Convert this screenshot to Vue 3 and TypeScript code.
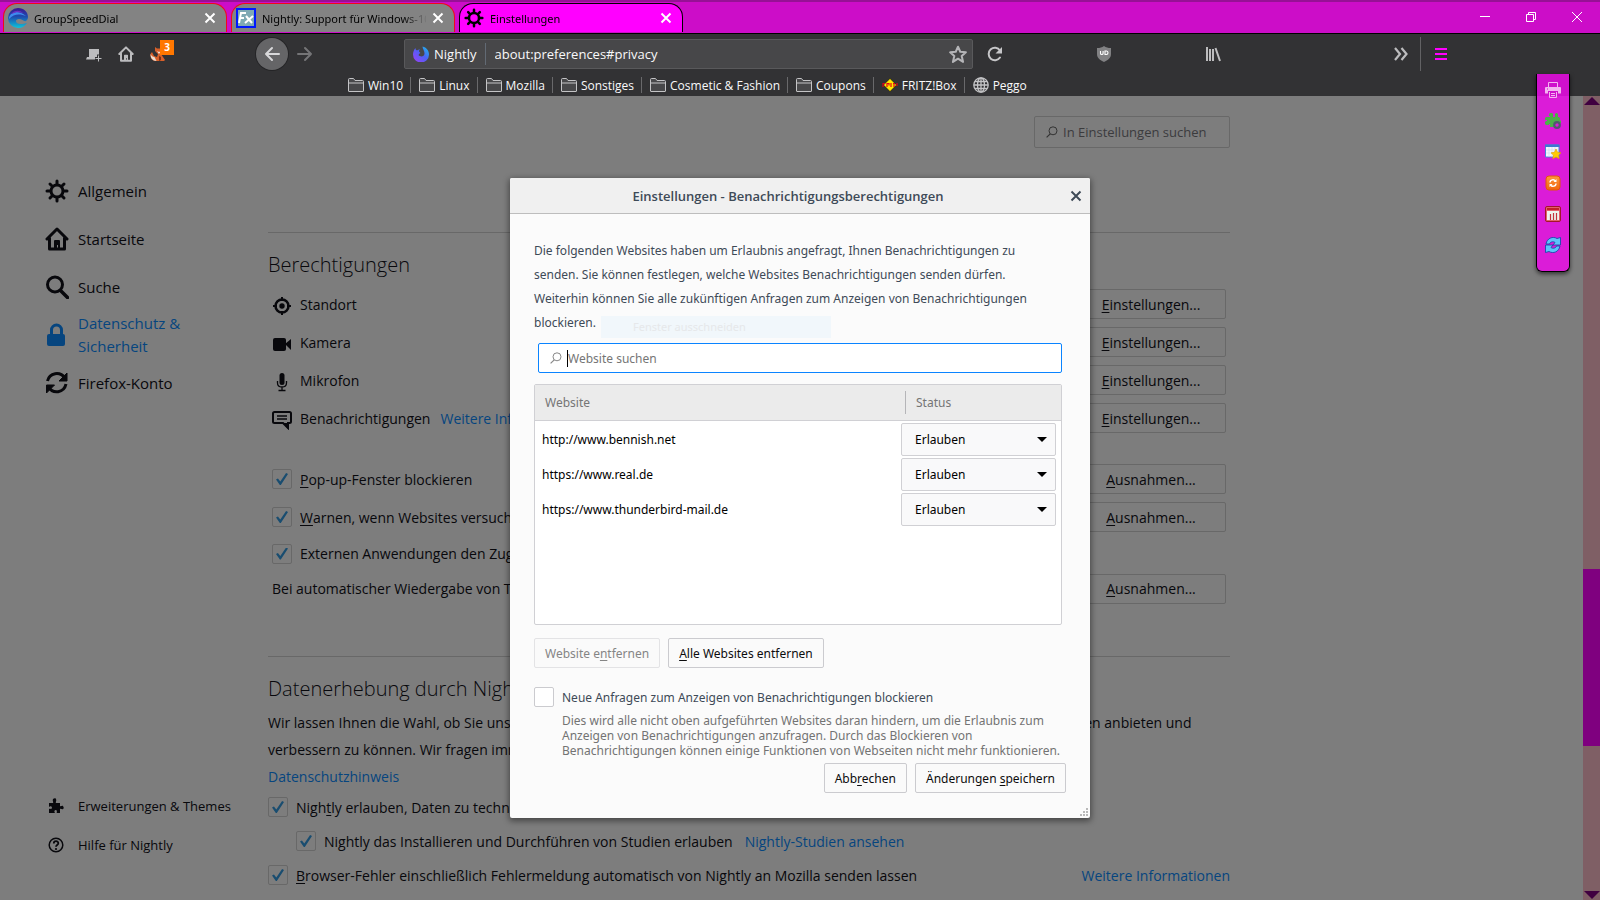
<script setup lang="ts">
import { ref } from 'vue'

interface Tab { title: string; icon: string; active: boolean }
interface Bookmark { title: string; icon: string }
interface Category { title: string; icon: string; selected?: boolean }
interface Permission { title: string; icon: string; link?: string }
interface Option { label: string; on: boolean; button?: boolean }
interface Site { url: string; status: string }

const tabs: Tab[] = [
  { title: 'GroupSpeedDial', icon: 'i-speed', active: false },
  { title: 'Nightly: Support für Windows-10', icon: 'i-fx', active: false },
  { title: 'Einstellungen', icon: 'i-gear', active: true },
]

const bookmarks: Bookmark[] = [
  { title: 'Win10', icon: 'i-folder' },
  { title: 'Linux', icon: 'i-folder' },
  { title: 'Mozilla', icon: 'i-folder' },
  { title: 'Sonstiges', icon: 'i-folder' },
  { title: 'Cosmetic & Fashion', icon: 'i-folder' },
  { title: 'Coupons', icon: 'i-folder' },
  { title: 'FRITZ!Box', icon: 'i-fritz' },
  { title: 'Peggo', icon: 'i-globe' },
]

const categories: Category[] = [
  { title: 'Allgemein', icon: 'i-gear' },
  { title: 'Startseite', icon: 'i-home' },
  { title: 'Suche', icon: 'i-search' },
  { title: 'Datenschutz & Sicherheit', icon: 'i-lock', selected: true },
  { title: 'Firefox-Konto', icon: 'i-sync' },
]

const permissions: Permission[] = [
  { title: 'Standort', icon: 'i-location' },
  { title: 'Kamera', icon: 'i-camera' },
  { title: 'Mikrofon', icon: 'i-mic' },
  { title: 'Benachrichtigungen', icon: 'i-note', link: 'Weitere Informationen' },
]

const options = ref<Option[]>([
  { label: '_Pop-up-Fenster blockieren', on: true, button: true },
  { label: '_Warnen, wenn Websites versuchen, Add-ons zu installieren', on: true, button: true },
  { label: 'Externen Anwendungen den Zugriff auf Dienste verwehren', on: true },
])

const sites = ref<Site[]>([
  { url: 'http://www.bennish.net', status: 'Erlauben' },
  { url: 'https://www.real.de', status: 'Erlauben' },
  { url: 'https://www.thunderbird-mail.de', status: 'Erlauben' },
])

const sideTools = [
  { title: 'Drucken', icon: 'i-print' },
  { title: 'Add-ons', icon: 'i-addon' },
  { title: 'Lesezeichen', icon: 'i-starwin' },
  { title: 'Neu starten', icon: 'i-restart' },
  { title: 'Kalender', icon: 'i-cal' },
  { title: 'Synchronisieren', icon: 'i-bluesync' },
]

const technical = ref(true)
const studies = ref(true)
const crashes = ref(true)
const blockNew = ref(false)
const filter = ref('')
const query = ref('')

/** Splits "Abb_rechen" into the text before, the access key and the text after. */
function parts(label: string): [string, string, string] {
  const at = label.indexOf('_')
  if (at < 0) return [label, '', '']
  return [label.slice(0, at), label[at + 1], label.slice(at + 2)]
}
</script>

<template>
  <div class="window">
    <svg class="defs" aria-hidden="true">
      <defs>
        <linearGradient id="g-speed" x1="0" y1="0" x2="0" y2="1">
          <stop offset="0" stop-color="#3d1490" /><stop offset="0.45" stop-color="#1c4fb0" /><stop offset="1" stop-color="#0fc4da" />
        </linearGradient>
        <linearGradient id="g-night" x1="1" y1="0" x2="0" y2="1">
          <stop offset="0" stop-color="#17c5e8" /><stop offset="0.45" stop-color="#4b62f5" /><stop offset="1" stop-color="#a13cf5" />
        </linearGradient>
        <linearGradient id="g-or" x1="0" y1="0" x2="0" y2="1">
          <stop offset="0" stop-color="#ff9a3c" /><stop offset="1" stop-color="#f0640f" />
        </linearGradient>
      </defs>
      <symbol id="i-speed" viewBox="0 0 20 20">
        <path d="M10 0c6 0 10 4 10 9 0 2-1 3-2 4-2 1-4-2-7-2-2 0-3 1-3 2 0 3 4 4 11 2-2 3-5 5-9 5A10 10 0 0 1 10 0z" fill="url(#g-speed)" />
        <path d="M1 9c3-6 10-7 17-1-5-2-12-3-17 3z" fill="#3d8bee" />
        <path d="M4 5c3-3 8-3 11 0-4-1-8-1-11 1z" fill="#6a2fc4" />
      </symbol>
      <symbol id="i-fx" viewBox="0 0 20 20">
        <rect x="1" y="1" width="18" height="18" fill="#7fa9b4" stroke="#0018ff" stroke-width="2" />
        <path d="M3 15 5 5h5M4 10h4" fill="none" stroke="#fff" stroke-width="2" />
        <path d="m10 8 6 7M17 8l-8 7" fill="none" stroke="#fff" stroke-width="2" />
      </symbol>
      <symbol id="i-gear" viewBox="0 0 24 24">
        <g fill="none" stroke="currentColor" stroke-linecap="round">
          <circle cx="12" cy="12" r="6" stroke-width="3" />
          <path stroke-width="3" d="M12 2v3M12 19v3M2 12h3M19 12h3M5 5l2 2M17 17l2 2M5 19l2-2M17 7l2-2" />
        </g>
      </symbol>
      <symbol id="i-home" viewBox="0 0 24 24">
        <path d="M2 12 12 2l10 10M4.500 11v11h15V11" fill="none" stroke="currentColor" stroke-width="3" stroke-linejoin="round" stroke-linecap="round" />
        <path d="M9 21v-7q0-1 1-1h4q1 0 1 1v7h-2v-3h-1v3z" fill="currentColor" />
      </symbol>
      <symbol id="i-search" viewBox="0 0 24 24">
        <g fill="none" stroke="currentColor" stroke-linecap="round"><circle cx="10" cy="9.500" r="7.500" stroke-width="3" /><path d="m15.500 15.500 7 7" stroke-width="3.500" /></g>
      </symbol>
      <symbol id="i-lock" viewBox="0 0 24 24">
        <path d="M6.500 12V7a5 5 0 0 1 10 0v5" fill="none" stroke="currentColor" stroke-width="3" />
        <rect x="2" y="11" width="18" height="12" rx="2" fill="currentColor" />
      </symbol>
      <symbol id="i-sync" viewBox="0 0 24 24">
        <g fill="none" stroke="currentColor" stroke-width="3"><path d="M2.500 10C4.500 1.500 15 0 20 7M21 13c-2 9-13 10.500-17.500 3" /></g>
        <path d="M22 2v8h-8zM1.500 22v-8h8z" fill="currentColor" stroke="currentColor" stroke-linejoin="round" />
      </symbol>
      <symbol id="i-location" viewBox="0 0 20 20">
        <circle cx="10" cy="10" r="6.500" fill="none" stroke="currentColor" stroke-width="2.500" />
        <circle cx="10" cy="10" r="2.700" fill="currentColor" />
        <path d="M10 1v4M10 15v4M1 10h4M15 10h4" stroke="currentColor" stroke-width="2" />
      </symbol>
      <symbol id="i-camera" viewBox="0 0 20 20">
        <rect x="1" y="4" width="13" height="13" rx="2" fill="currentColor" /><path d="m13 10 6-5v11z" fill="currentColor" />
      </symbol>
      <symbol id="i-mic" viewBox="0 0 20 20">
        <rect x="7.500" y="1" width="5" height="12" rx="2.500" fill="currentColor" />
        <path d="M5.500 9v2q0 4 4.500 4t4.500-4V9M10 15v3M6.500 18.500h7" fill="none" stroke="currentColor" stroke-width="1.300" />
      </symbol>
      <symbol id="i-note" viewBox="0 0 20 20">
        <path d="M2.500 2h15q1.500 0 1.500 1.500v8q0 1.500-1.500 1.500H16v5l-5-5H2.500Q1 13 1 11.500v-8Q1 2 2.500 2z" fill="none" stroke="currentColor" stroke-width="2" />
        <path d="M11 13h5v6z" fill="currentColor" /><path d="M5 6h10M5 9h10" stroke="currentColor" stroke-width="1.300" />
      </symbol>
      <symbol id="i-puzzle" viewBox="0 0 16 16">
        <path d="M1 5h4c1-1-1-2 0-4 1-1 3-1 3 0 1 2-1 3 0 4h4v3c1 1 2-1 3 0 1 2 1 2 0 3-1 1-2-1-3 0v4H9c-1-1 1-2-1-3-2 0-2 2-1 3H1v-4c1-1 2 1 3-1 0-2-2-2-3-1z" fill="currentColor" />
      </symbol>
      <symbol id="i-help" viewBox="0 0 16 16">
        <circle cx="8" cy="8" r="6.800" fill="none" stroke="currentColor" stroke-width="1.500" />
        <path d="M5.800 6.500c0-3 4.500-3 4.500-.3C10.300 8 8 8 8 9.800" fill="none" stroke="currentColor" stroke-width="1.800" /><circle cx="8" cy="12" r="1.100" fill="currentColor" />
      </symbol>
      <symbol id="i-folder" viewBox="0 0 16 16">
        <path d="M.5 14V2.500q0-1 1-1h4l1.500 2h7.500q1 0 1 1V14q0 .5-.5.5H1q-.5 0-.5-.5zM.5 6h15" fill="#48484a" stroke="#c4c4c6" />
      </symbol>
      <symbol id="i-fritz" viewBox="0 0 16 16">
        <path d="m8 1.500 6.500 6.500L8 14.500 1.500 8z" fill="#ffe600" stroke="#000" stroke-width=".5" /><path d="M1 6v4M1 6.500h2M5 10V6.500h2v2M9 6v4M11 6.500h2M12 6.500V10M15 6v3" stroke="#e2001a" stroke-width="1.200" fill="none" />
      </symbol>
      <symbol id="i-globe" viewBox="0 0 16 16">
        <g fill="none" stroke="#c4c4c6" stroke-width="1.300"><circle cx="8" cy="8" r="7.200" /><ellipse cx="8" cy="8" rx="3.500" ry="7.200" /><path d="M8 1v14M1 8h14M2 4.500h12M2 11.500h12" /></g>
      </symbol>
      <symbol id="i-newtab" viewBox="0 0 16 16">
        <path d="M3 3h10v7H3zM1 11h9v2.500H0z" fill="#bcbcbe" /><path d="M3 10h10v1.500H3z" fill="#bcbcbe" /><path d="M12.500 8.500V16M9 12.500h7" stroke="#323234" stroke-width="3" /><path d="M12.500 9.500v6M9.500 12.500h6" stroke="#bcbcbe" />
      </symbol>
      <symbol id="i-fox" viewBox="0 0 16 16">
        <path d="M5 1l2 1.500h3L12 1v4l-1 3 2 3 2 3-1 1H6c-4 0-6-3-5.500-7L2 6l2 4 3 1 1-3-3-3z" fill="#d8602a" />
        <path d="M.5 8c1 2 2 3 4 3l2 4c-4 0-6-3-6-7z" fill="#ecdccf" /><path d="M9 10l2 1v3l-2 1z" fill="#7c2f13" /><path d="M7 5l2 1 2-1-2 3z" fill="#f3e5da" />
      </symbol>
      <symbol id="i-back" viewBox="0 0 16 16">
        <path d="M15 8H2M8 2 2 8l6 6" fill="none" stroke="currentColor" stroke-width="2" stroke-linecap="round" stroke-linejoin="round" />
      </symbol>
      <symbol id="i-forward" viewBox="0 0 16 16">
        <path d="M1 8h13M8 2l6 6-6 6" fill="none" stroke="currentColor" stroke-width="2" stroke-linecap="round" stroke-linejoin="round" />
      </symbol>
      <symbol id="i-nightly" viewBox="0 0 16 16">
        <path d="M2.500 2c0 1.500.5 2 1.500 2.500C5 3.500 6 3.500 7 3.500 6 4.500 5.500 5 6.500 6c1 .5 1 1 0 1.500L5.500 9c2 2.500 6 1.500 6-1.500 0-3-2-4.500-2-7C13.500 1.500 16 4.500 16 8.500A8 8 0 0 1 0 8.500C0 6 1 3.500 2.500 2z" fill="url(#g-night)" />
      </symbol>
      <symbol id="i-star" viewBox="0 0 16 16">
        <path d="m8 1.500 2 4.500 5 .5-3.700 3.300L12.500 15 8 12.200 3.500 15l1.200-5.200L1 6.500 6 6z" fill="none" stroke="#b5b5b8" stroke-width="1.800" stroke-linejoin="round" />
      </symbol>
      <symbol id="i-reload" viewBox="0 0 16 16">
        <path d="M13 4.500A6.200 6.200 0 1 0 13 11.500" fill="none" stroke="#c6c6c8" stroke-width="2" stroke-linecap="round" /><path d="M15 1v6.500H8.500z" fill="#c6c6c8" />
      </symbol>
      <symbol id="i-shield" viewBox="0 0 16 16">
        <path d="M8 0c2 1.500 4 2 7 2v6c0 4-3 6-7 8-4-2-7-4-7-8V2c3 0 5-.5 7-2z" fill="#818183" />
        <path d="M4.500 5v2.500q0 1 1.300 1t1.300-1V5M9 5v3.500h1.500q1.500 0 1.500-1.700T10.500 5z" fill="none" stroke="#fff" stroke-width="1.100" />
      </symbol>
      <symbol id="i-library" viewBox="0 0 16 16">
        <path d="M2 1v14M5 3v12M8 3v12M10.500 2 15 15" fill="none" stroke="#bcbcbe" stroke-width="2" />
      </symbol>
      <symbol id="i-more" viewBox="0 0 16 16">
        <path d="m2 2 5 6-5 6M8.500 2l5 6-5 6" fill="none" stroke="#bcbcbe" stroke-width="2.200" />
      </symbol>
      <symbol id="i-x" viewBox="0 0 16 16">
        <path d="m2 2 12 12M14 2 2 14" fill="none" stroke="currentColor" stroke-width="2.600" />
      </symbol>
      <symbol id="i-lens" viewBox="0 0 12 12">
        <circle cx="7" cy="4.800" r="4" fill="none" stroke="currentColor" /><path d="M4.200 7.800.6 11.400" stroke="currentColor" stroke-width="1.200" />
      </symbol>
      <symbol id="i-print" viewBox="0 0 16 16">
        <path d="M0 6q0-1 1-1h14q1 0 1 1v5q0 .5-.5.500H13V9H3v2.500H.500Q0 11.500 0 11z" fill="#f3b4f0" /><path d="M3.500 5V.5h9V5M4.500 10v5.500h7V10M6 11.500h4M6 13.500h4" fill="none" stroke="#f3b4f0" /><path d="M2 7h1" stroke="#cc0dc8" />
      </symbol>
      <symbol id="i-addon" viewBox="0 0 16 16">
        <path d="M3 4h2V3H4V1l1-1h2l1 1v3h2V1l1-1h1l1 1v3h1l1 1v2l1 1v2h-4l-3 2v2H5v-3H4v1H1l-1-1V9l1-1h1V7H0V5l1-1z" fill="#4cb04a" /><circle cx="12" cy="12" r="2.800" fill="none" stroke="#505a6e" stroke-width="2.200" />
      </symbol>
      <symbol id="i-starwin" viewBox="0 0 16 16">
        <path d="M.5 1h13.500v12H.5z" fill="#f3f7fd" stroke="#4a86d8" /><path d="M0 .5h14.500v2.500H0z" fill="#3c78d0" /><path d="M1 6h12M1 9h12M4 3v10M7 3v10M10 3v10" stroke="#c6d8f0" stroke-width=".6" /><path d="m11 5 1.600 3.300 3.400.5-2.500 2.300.7 3.600-3.200-1.700-3.200 1.700.6-3.600L6 8.800l3.400-.5z" fill="#ffcb05" stroke="#e39a00" stroke-width=".6" />
      </symbol>
      <symbol id="i-restart" viewBox="0 0 16 16">
        <rect x="1" y="1" width="14" height="14" rx="3" fill="url(#g-or)" stroke="#e2560b" /><path d="M5 7.500C5 4.500 9 4 10.500 6M11 8.500c0 3-4 3.500-5.500 1.500" fill="none" stroke="#fff" stroke-width="1.400" /><path d="M11.500 4v3h-3zM4.500 12V9h3z" fill="#fff" />
      </symbol>
      <symbol id="i-cal" viewBox="0 0 16 16">
        <rect x=".5" y=".5" width="15" height="15" rx="1.500" fill="#e2606a" stroke="#a3152a" /><path d="M2 2h12v2H2z" fill="#c21e2c" /><path d="M2 5h12v9H2z" fill="#eef2ee" /><path d="M5.500 14V8M8.500 14V7M11.500 14V7" stroke="#c4333d" stroke-width="1.200" />
      </symbol>
      <symbol id="i-bluesync" viewBox="0 0 16 16">
        <path d="M1 7C2 1 8-1 12 1.500L15.500.500V8H8l2-2.500C8 4 5 5 4.500 7z" fill="#5cc4fa" stroke="#1b49ad" stroke-width=".9" /><path d="M15 9c-1 6-7 8-11 5.500L.500 15.500V8H8l-2 2.500c2 1.500 5 .5 5.500-1.500z" fill="#5cc4fa" stroke="#1b49ad" stroke-width=".9" />
      </symbol>
    </svg>

    <header class="titlebar">
      <div class="tabs" role="tablist">
        <div v-for="tab in tabs" :key="tab.title" class="tab" :class="{ active: tab.active }" role="tab" :aria-selected="tab.active">
          <svg class="s20"><use :href="'#' + tab.icon" /></svg>
          <span class="tab-title">{{ tab.title }}</span>
          <button class="tab-close" aria-label="Tab schließen"><svg class="s12"><use href="#i-x" /></svg></button>
        </div>
      </div>
      <div class="controls">
        <button aria-label="Minimieren"><svg viewBox="0 0 10 10"><path d="M0 4.500h10" /></svg></button>
        <button aria-label="Verkleinern"><svg viewBox="0 0 10 10"><path d="M.5 2.500h7v7h-7zM2.500 2.500v-2h7v7h-2" /></svg></button>
        <button aria-label="Schließen"><svg viewBox="0 0 10 10"><path d="m0 0 10 10M10 0 0 10" /></svg></button>
      </div>
    </header>

    <nav class="navbar" aria-label="Navigation">
      <div class="nav-left">
        <button class="tool" aria-label="Neuer Tab"><svg class="s16"><use href="#i-newtab" /></svg></button>
        <button class="tool" aria-label="Startseite"><svg class="s16"><use href="#i-home" /></svg></button>
        <button class="tool fox" aria-label="Erweiterung"><svg class="s16"><use href="#i-fox" /></svg><span class="badge">3</span></button>
      </div>
      <div class="nav-history">
        <button class="back" aria-label="Zurück"><svg class="s16"><use href="#i-back" /></svg></button>
        <button class="tool forward" aria-label="Vor"><svg class="s16"><use href="#i-forward" /></svg></button>
      </div>
      <div class="urlbar">
        <svg class="s16"><use href="#i-nightly" /></svg>
        <span class="identity">Nightly</span>
        <input class="url" type="text" value="about:preferences#privacy" aria-label="Adresse">
        <button class="tool" aria-label="Lesezeichen setzen"><svg class="s18"><use href="#i-star" /></svg></button>
      </div>
      <div class="nav-right">
        <button class="tool" aria-label="Neu laden"><svg class="s16"><use href="#i-reload" /></svg></button>
        <button class="tool" aria-label="uBlock"><svg class="s16"><use href="#i-shield" /></svg></button>
        <button class="tool" aria-label="Bibliothek"><svg class="s16"><use href="#i-library" /></svg></button>
        <button class="tool push" aria-label="Weitere Werkzeuge"><svg class="s16"><use href="#i-more" /></svg></button>
        <span class="nav-sep"></span>
        <button class="tool menu" aria-label="Menü"><i></i><i></i><i></i></button>
      </div>
    </nav>

    <nav class="bookmarks" aria-label="Lesezeichen">
      <a v-for="b in bookmarks" :key="b.title" href="#"><svg class="s16"><use :href="'#' + b.icon" /></svg>{{ b.title }}</a>
    </nav>

    <div class="content">
      <aside class="sidebar">
        <a v-for="c in categories" :key="c.title" href="#" class="category" :class="{ selected: c.selected }">
          <svg class="s24"><use :href="'#' + c.icon" /></svg><span>{{ c.title }}</span>
        </a>
        <div class="side-foot">
          <a href="#"><svg class="s16"><use href="#i-puzzle" /></svg>Erweiterungen &amp; Themes</a>
          <a href="#"><svg class="s16"><use href="#i-help" /></svg>Hilfe für Nightly</a>
        </div>
      </aside>

      <main class="pane">
        <label class="pref-search">
          <svg class="s12"><use href="#i-lens" /></svg>
          <input v-model="query" type="text" placeholder="In Einstellungen suchen" aria-label="In Einstellungen suchen">
        </label>

        <section class="group">
          <h2>Berechtigungen</h2>
          <div v-for="p in permissions" :key="p.title" class="row perm">
            <svg class="s20"><use :href="'#' + p.icon" /></svg>
            <span>{{ p.title }}</span>
            <a v-if="p.link" href="#">{{ p.link }}</a>
            <button class="pref-btn"><u>E</u>instellungen...</button>
          </div>
          <div class="options">
            <div v-for="(o, i) in options" :key="o.label" class="row" :class="{ tight: !o.button }">
              <input :id="'opt' + i" v-model="o.on" type="checkbox">
              <label :for="'opt' + i">{{ parts(o.label)[0] }}<u>{{ parts(o.label)[1] }}</u>{{ parts(o.label)[2] }}</label>
              <button v-if="o.button" class="pref-btn"><u>A</u>usnahmen...</button>
            </div>
            <div class="row tight">
              <span>Bei automatischer Wiedergabe von Ton</span>
              <button class="pref-btn"><u>A</u>usnahmen...</button>
            </div>
          </div>
        </section>

        <section class="group second">
          <h2>Datenerhebung durch Nightly und deren Verwendung</h2>
          <p>Wir lassen Ihnen die Wahl, ob Sie uns Daten senden, und sammeln nur die Daten, welche erforderlich sind, um Nightly für jeden anbieten und verbessern zu können. Wir fragen immer um Ihre Erlaubnis, bevor wir persönliche Daten senden.<br><a href="#">Datenschutzhinweis</a></p>
          <div class="check"><input id="tech" v-model="technical" type="checkbox"><label for="tech">Nigh<u>t</u>ly erlauben, Daten zu technischen Details und Interaktionen zu senden</label></div>
          <div class="check nested"><input id="stud" v-model="studies" type="checkbox"><label for="stud">Nightly das Installieren und Durchführen von Studien erlauben</label><a href="#">Nightly-Studien ansehen</a></div>
          <div class="check"><input id="crash" v-model="crashes" type="checkbox"><label for="crash"><u>B</u>rowser-Fehler einschließlich Fehlermeldung automatisch von Nightly an Mozilla senden lassen</label><a class="end" href="#">Weitere Informationen</a></div>
        </section>
      </main>

      <div class="scrollbar" aria-hidden="true"><i class="up"></i><i class="thumb"></i><i class="down"></i></div>

      <div class="overlay">
        <div class="dialog" role="dialog" aria-labelledby="dlg-title">
          <div class="dlg-head">
            <h1 id="dlg-title">Einstellungen - Benachrichtigungsberechtigungen</h1>
            <button class="dlg-close" aria-label="Schließen"><svg class="s12"><use href="#i-x" /></svg></button>
          </div>
          <div class="dlg-body">
            <p class="intro">Die folgenden Websites haben um Erlaubnis angefragt, Ihnen Benachrichtigungen zu<br>senden. Sie können festlegen, welche Websites Benachrichtigungen senden dürfen.<br>Weiterhin können Sie alle zukünftigen Anfragen zum Anzeigen von Benachrichtigungen<br>blockieren.<span class="ghost">Fenster ausschneiden</span></p>
            <label class="site-search">
              <svg class="s12"><use href="#i-lens" /></svg>
              <span class="caret"></span>
              <input v-model="filter" type="text" placeholder="Website suchen" aria-label="Website suchen">
            </label>
            <div class="tree">
              <table>
                <thead><tr><th>Website</th><th class="status"><span>Status</span></th></tr></thead>
                <tbody>
                  <tr v-for="s in sites" :key="s.url">
                    <td>{{ s.url }}</td>
                    <td class="cell"><span class="drop"><select v-model="s.status" :aria-label="'Status ' + s.url"><option>Erlauben</option><option>Blockieren</option></select></span></td>
                  </tr>
                </tbody>
              </table>
            </div>
            <div class="btns">
              <button class="btn" disabled>Website e<u>n</u>tfernen</button>
              <button class="btn"><u>A</u>lle Websites entfernen</button>
            </div>
            <div class="block">
              <input id="blocknew" v-model="blockNew" type="checkbox">
              <label for="blocknew">Neue Anfragen zum Anzeigen von Benachrichtigungen blockieren</label>
            </div>
            <p class="desc">Dies wird alle nicht oben aufgeführten Websites daran hindern, um die Erlaubnis zum<br>Anzeigen von Benachrichtigungen anzufragen. Durch das Blockieren von<br>Benachrichtigungen können einige Funktionen von Webseiten nicht mehr funktionieren.</p>
            <div class="btns end">
              <button class="btn">Abb<u>r</u>echen</button>
              <button class="btn">Änderungen <u>s</u>peichern</button>
            </div>
          </div>
          <svg class="grip" viewBox="0 0 8 8"><path d="M6 0h2v2H6zM6 3h2v2H6zM6 6h2v2H6zM3 3h2v2H3zM3 6h2v2H3zM0 6h2v2H0z" fill="#b9b9b9" /></svg>
        </div>
      </div>
    </div>

    <div class="sidepanel">
      <button v-for="t in sideTools" :key="t.icon" :aria-label="t.title"><svg class="s16"><use :href="'#' + t.icon" /></svg></button>
    </div>
  </div>
</template>

<style>
body { margin: 0; background: #7d7d7d; }
</style>

<style scoped>
.window {
  position: relative;
  height: 100vh;
  min-height: 900px;
  display: flex;
  flex-direction: column;
  overflow: hidden;
  font-family: "Open Sans", "Noto Sans", sans-serif;
  font-size: 14px;
  color: #08080c;
  background: #7d7d7d;
}
.window *, .window *::before, .window *::after { box-sizing: border-box; }
button, input, select { font: inherit; color: inherit; margin: 0; }
button { background: none; border: 0; padding: 0; display: flex; align-items: center; justify-content: center; }
a { text-decoration: none; color: #06457f; }
u { text-decoration: underline; text-underline-offset: 2px; }
svg { flex: none; display: block; }
.defs { position: absolute; width: 0; height: 0; }
.s12 { width: 12px; height: 12px; }
.s16 { width: 16px; height: 16px; }
.s18 { width: 18px; height: 18px; }
.s20 { width: 20px; height: 20px; }
.s24 { width: 24px; height: 24px; }

.titlebar { flex: none; height: 34px; border-top: 2px solid #971096; border-bottom: 1px solid #000; background: #cc0dc8; display: flex; }
.tabs { display: flex; gap: 4px; padding: 1px 0 1px 3px; flex: 1; min-width: 0; }
.tab { width: 224px; display: flex; align-items: center; gap: 6px; padding: 0 10px 0 4px; background: #838383; border: 1px solid #f00818; border-bottom: 0; border-radius: 14px 14px 0 0; color: #000; font-family: "Noto Sans", sans-serif; font-size: 11px; }
.tab.active { background: #ff00ff; border-color: #000; }
.tab-title { flex: 1; min-width: 0; overflow: hidden; white-space: nowrap; mask-image: linear-gradient(90deg, #000 140px, transparent 166px); }
.tab-close { color: #fff; }
.controls { display: flex; }
.controls button { width: 46px; height: 30px; }
.controls svg { width: 10px; height: 10px; fill: none; stroke: #fff; stroke-width: 1; }

.navbar { flex: none; height: 40px; background: #323234; display: flex; align-items: center; color: #bcbcbe; }
.tool { flex: none; width: 32px; height: 32px; }
.nav-left { display: flex; flex: none; width: 256px; padding-left: 78px; }
.nav-history { display: flex; flex: none; gap: 1px; width: 148px; }
.back { width: 32px; height: 32px; border-radius: 50%; background: #656567; color: #d8d8da; box-shadow: 0 0 0 1px #252527; }
.forward { color: #757577; }
.fox { position: relative; }
.badge { position: absolute; top: 2px; right: 0; width: 14px; height: 15px; background: #ff7700; color: #fff; font-size: 10px; line-height: 15px; font-weight: 700; }
.urlbar { flex: 0 1 569px; min-width: 0; height: 30px; border: 1px solid #59595b; border-radius: 2px; background: #474749; display: flex; align-items: center; padding-left: 8px; color: #f9f9fa; font-size: 13px; }
.identity { padding: 0 8px 0 5px; border-right: 1px solid #626a74; line-height: 22px; }
.url { flex: 1; min-width: 0; border: 0; padding: 0 9px; background: none; outline: 0; }
.urlbar .tool { width: 28px; }
.nav-right { flex: 1; display: flex; align-items: center; padding: 0 143px 0 6px; }
.nav-right .tool + .tool { margin-left: 77px; }
.nav-right .tool.push { margin-left: auto; }
.nav-sep { width: 1px; height: 34px; margin: 0 4px 0 3px; background: #626264; }
.menu { flex-direction: column; gap: 3px; }
.menu i { width: 12px; height: 2px; background: #ff00ff; }

.bookmarks { flex: none; height: 22px; padding-left: 340px; background: #323234; display: flex; align-items: center; }
.bookmarks a { display: flex; align-items: center; gap: 4px; padding: 0 7px 0 8px; height: 16px; font-size: 12px; color: #f9f9fa; white-space: nowrap; }
.bookmarks a + a { border-left: 1px solid #69696b; }

.content { position: relative; flex: 1; display: grid; grid-template-columns: 268px minmax(0, 962px) 1fr; }
.sidebar { display: flex; flex-direction: column; padding: 71px 40px 36px 45px; }
.category { display: flex; align-items: center; gap: 9px; height: 48px; font-size: 15px; line-height: 23px; color: #08080c; }
.category.selected { color: #06457f; }
.category span { max-width: 120px; }
.side-foot { margin-top: auto; }
.side-foot a { display: flex; align-items: center; gap: 14px; height: 39px; padding-left: 3px; color: #08080c; font-size: 13px; white-space: nowrap; margin-right: -40px; }

.pane { padding-top: 20px; }
.pref-search { display: flex; align-items: center; gap: 5px; width: 196px; height: 32px; margin-left: auto; padding-left: 11px; border: 1px solid #686868; border-radius: 2px; }
.pref-search input { width: 100%; min-width: 0; border: 0; padding: 0; background: none; font-size: 13px; outline: 0; }
.pref-search svg { color: #333; }
.pref-search input::placeholder { color: #3b3b3d; opacity: 1; }
.group { margin-top: 84px; border-top: 1px solid #686868; padding-top: 16px; }
.group.second { margin-top: 50px; }
h2 { margin: 0 0 4px; font-size: 20px; line-height: 32px; font-weight: 300; white-space: nowrap; }
.row { display: flex; align-items: center; height: 38px; padding: 0 4px; gap: 8px; white-space: nowrap; }
.row.tight { height: 35px; }
.perm svg { margin-top: 4px; }
.row a { margin-left: 2px; }
.options { margin-top: 23px; }
.pref-btn { width: 150px; height: 30px; margin-left: auto; border: 1px solid #686868; border-radius: 2px; }
input[type="checkbox"] { appearance: none; flex: none; position: relative; width: 20px; height: 20px; border: 1px solid #686868; border-radius: 2px; }
input[type="checkbox"]:checked::after { content: ""; position: absolute; inset: 3px; background: #194d70; clip-path: polygon(0 55%, 16% 45%, 36% 70%, 84% 0, 100% 8%, 40% 100%, 32% 100%); }
.group p { margin: 0; line-height: 27px; }
.check { display: flex; align-items: center; gap: 8px; height: 34px; white-space: nowrap; }
.check.nested { padding-left: 28px; }
.check a { margin-left: 4px; }
.check a.end { margin-left: auto; }

.scrollbar { position: absolute; right: 0; top: 0; bottom: 0; width: 17px; background: #7f5f65; display: flex; flex-direction: column; align-items: center; padding: 1px 0; }
.scrollbar i { border: 8px solid transparent; }
.scrollbar .up { border-top: 0; border-bottom-color: #400040; }
.scrollbar .down { margin-top: auto; border-bottom: 0; border-top-color: #400040; }
.scrollbar .thumb { position: absolute; top: 473px; width: 17px; height: 177px; border: 0; background: #7f007f; }

.overlay { position: absolute; inset: 0; display: flex; align-items: center; justify-content: center; }
.dialog { position: relative; width: 580px; background: #fbfbfb; border-radius: 2px; box-shadow: 0 2px 6px 1px rgba(0, 0, 0, 0.45); font-family: "Noto Sans", sans-serif; font-size: 12px; color: #3e4a57; }
.dlg-head { display: flex; align-items: center; height: 36px; background: #f0f0f0; border-bottom: 1px solid #bdbdbd; border-radius: 2px 2px 0 0; }
.dlg-head h1 { flex: 1; margin: 0; padding-left: 4px; text-align: center; font-family: "Open Sans", sans-serif; font-size: 13px; font-weight: 600; }
.dlg-close { width: 28px; height: 28px; color: #3e4a57; }
.dlg-body { display: flex; flex-direction: column; padding: 25px 24px 25px; }
.intro { margin: 0 -20px 8px 0; line-height: 24px; white-space: nowrap; position: relative; }
.ghost { position: absolute; left: 67px; bottom: -3px; width: 230px; height: 22px; padding-left: 32px; font-size: 11px; line-height: 22px; color: #e6e8ea; background: #f1f7fb; }
.site-search { display: flex; align-items: center; height: 30px; margin-left: 4px; padding-left: 11px; border: 1px solid #0a84ff; border-radius: 2px; background: #fff; width: 524px; color: #888; }
.caret { width: 1px; height: 17px; margin-left: 5px; background: #000; }
.site-search input { flex: 1; border: 0; padding: 0; background: none; outline: 0; }
.site-search input::placeholder { color: #757575; opacity: 1; }
.tree { width: 528px; height: 241px; margin-top: 11px; border: 1px solid #d0d0d4; border-radius: 2px; background: #fff; color: #000; }
table { width: 100%; border-collapse: collapse; }
th { height: 35px; padding: 1px 0 0 10px; background: #ebebeb; border-bottom: 1px solid #d0d0d4; text-align: left; font-weight: 400; color: #757575; }
th.status { width: 160px; padding: 0 0 0 4px; }
th.status span { display: block; padding-left: 10px; line-height: 23px; border-left: 1px solid #b5b5b8; }
td { height: 35px; padding: 2px 0 0 7px; }
td.cell { padding: 2px 0 0; }
.drop { position: relative; display: block; width: 155px; height: 33px; }
.drop::after { content: ""; position: absolute; right: 9px; top: 14px; border: 5px solid transparent; border-top-color: #000; border-bottom: 0; pointer-events: none; }
.drop select { appearance: none; width: 100%; height: 100%; padding: 0 13px; border: 1px solid #d0d0d4; border-radius: 2px; background: #f9f9fa; }
.btns { display: flex; gap: 8px; margin-top: 13px; }
.btn { display: block; height: 30px; padding: 0 10px; border: 1px solid #cbcbcf; border-radius: 2px; background: #fafafa; color: #0c0c0d; white-space: nowrap; }
.btn:disabled { color: #858585; border-color: #e3e3e5; }
.block { display: flex; align-items: center; gap: 8px; margin-top: 19px; }
.block input { border-color: #cbcbcf; background: #fff; }
.desc { margin: 6px -20px 0 28px; line-height: 15px; color: #737373; white-space: nowrap; }
.btns.end { justify-content: flex-end; margin: 5px 0 0; }
.grip { position: absolute; right: 2px; bottom: 2px; width: 8px; height: 8px; }

.sidepanel { position: absolute; right: 30px; top: 74px; width: 34px; padding-bottom: 11px; background: rgba(235, 10, 232, 0.85); border: 1px solid #000; border-top: 0; border-radius: 0 0 6px 6px; box-shadow: 0 2px 4px rgba(0, 0, 0, 0.6); display: flex; flex-direction: column; }
.sidepanel button { height: 31px; }
</style>
